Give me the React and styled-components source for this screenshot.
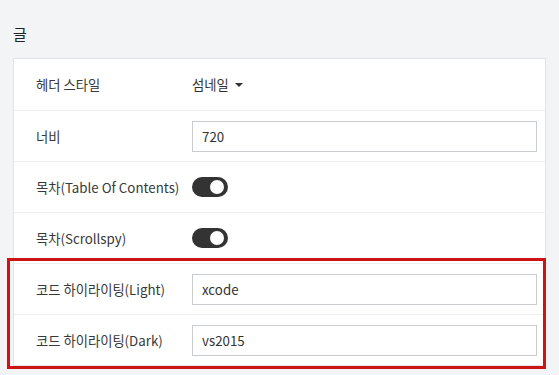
import React from 'react'
import styled, {createGlobalStyle} from 'styled-components'

const Global = createGlobalStyle`
  html, body {
    margin: 0;
    background: #f3f4f6;
    font-family: "Noto Sans CJK KR", "Noto Sans", sans-serif;
    color: #333;
  }
`

const Page = styled.div`
  padding: 22px 11px 11px 13px;
`

const Title = styled.h2`
  font-size: 15px;
  font-weight: 400;
  line-height: 24px;
  margin: 0 0 12px;
  color: #222;
`

const Card = styled.div`
  background: #fff;
  border: 1px solid #dfe4e8;
  width: 533px;
  box-sizing: border-box;
`

const Row = styled.div`
  display: flex;
  align-items: center;
  height: 51px;
  padding: 0 8px 0 22px;
  border-top: ${({first}) => (first ? 'none' : '1px solid #eef0f2')};
  box-sizing: border-box;
  font-size: 13.3px;
`

const Label = styled.div`
  width: 156px;
  flex: none;
  color: #383838;
`

const Input = styled.input`
  flex: 1;
  height: 31px;
  box-sizing: border-box;
  border: 1px solid #c9cdd0;
  padding: 0 9px;
  font: inherit;
  font-size: 13.3px;
  color: #333;
  outline: none;
`

const Select = styled.div`
  display: flex;
  align-items: center;
  gap: 6px;
  color: #333;
`

const Caret = styled.span`
  width: 0;
  height: 0;
  border-left: 4px solid transparent;
  border-right: 4px solid transparent;
  border-top: 4px solid #333;
  margin-top: 1px;
`

const Toggle = styled.span`
  position: relative;
  width: 36px;
  height: 20px;
  border-radius: 10px;
  background: #333;
  display: inline-block;

  &::after {
    content: '';
    position: absolute;
    top: 3px;
    right: 4px;
    width: 14px;
    height: 14px;
    border-radius: 50%;
    background: #fff;
  }
`

const Highlight = styled.div`
  position: relative;

  &::after {
    content: '';
    position: absolute;
    left: -7px;
    right: -1px;
    top: -5px;
    bottom: -4px;
    border: 3px solid #cc1414;
    pointer-events: none;
  }
`

export default function App() {
  return (
    <>
      <Global />
      <Page>
        <Title>글</Title>
        <Card>
          <Row first>
            <Label>헤더 스타일</Label>
            <Select>섬네일 <Caret /></Select>
          </Row>
          <Row>
            <Label>너비</Label>
            <Input defaultValue="720" />
          </Row>
          <Row>
            <Label>목차(Table Of Contents)</Label>
            <Toggle />
          </Row>
          <Row>
            <Label>목차(Scrollspy)</Label>
            <Toggle />
          </Row>
          <Highlight>
            <Row>
              <Label>코드 하이라이팅(Light)</Label>
              <Input defaultValue="xcode" />
            </Row>
            <Row>
              <Label>코드 하이라이팅(Dark)</Label>
              <Input defaultValue="vs2015" />
            </Row>
          </Highlight>
        </Card>
      </Page>
    </>
  )
}
